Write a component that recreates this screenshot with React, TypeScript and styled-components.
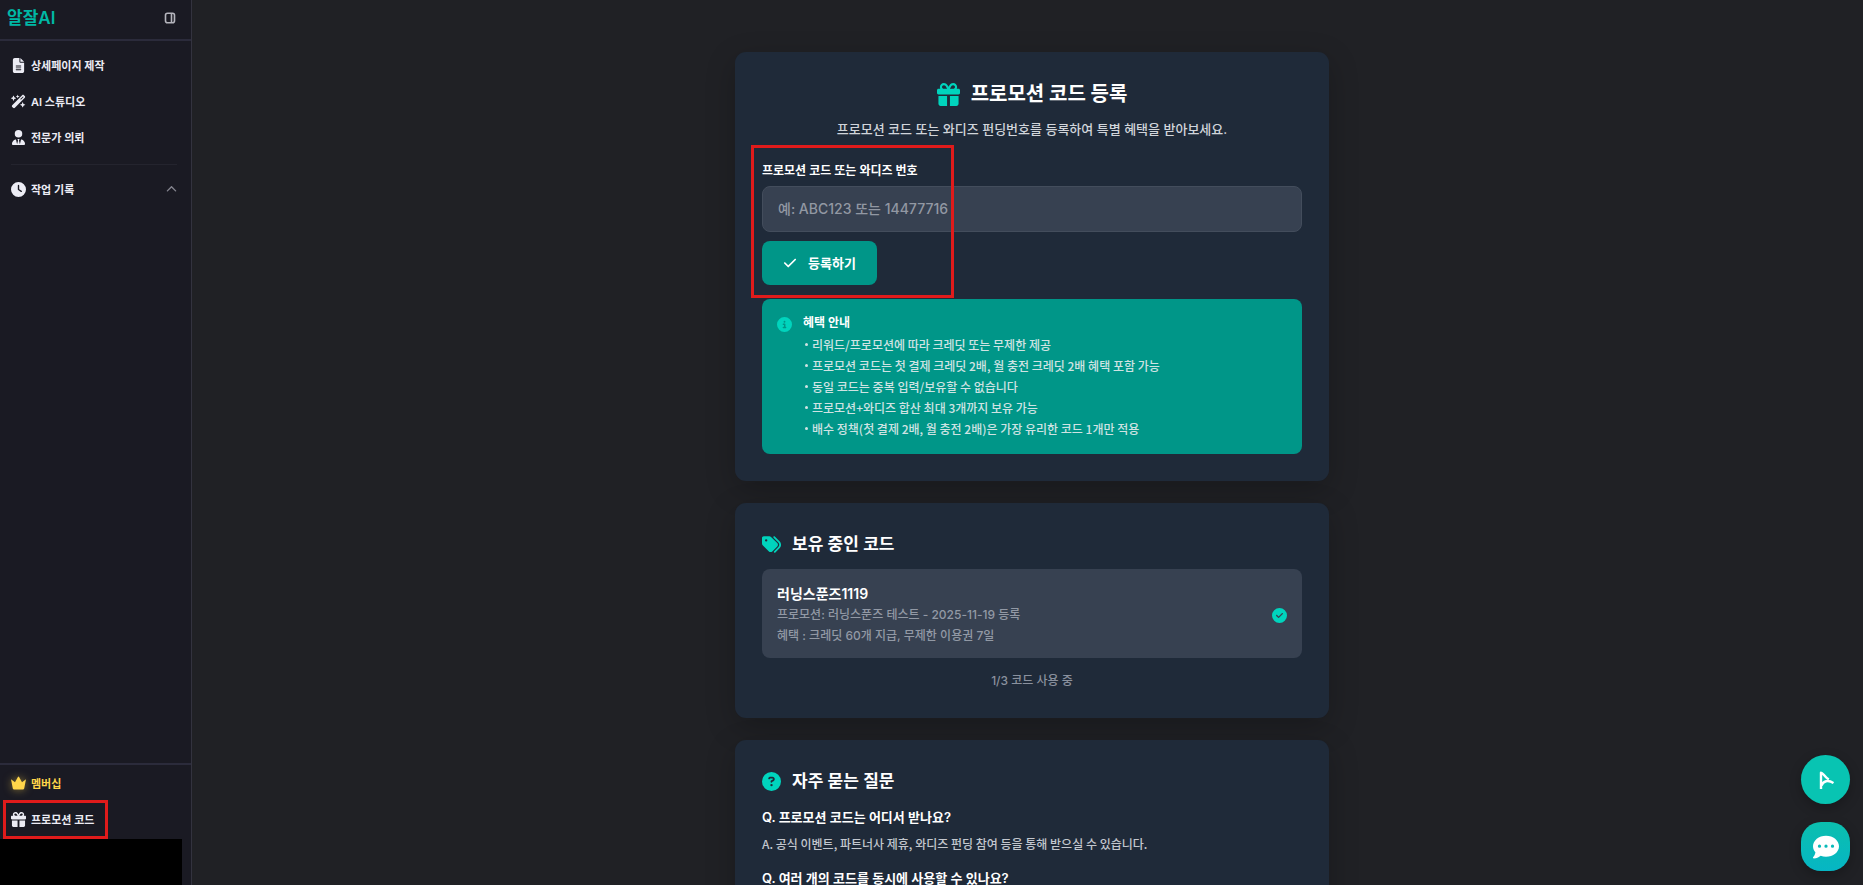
import React from 'react';
import styled, { createGlobalStyle, css } from 'styled-components';
import {
  FaCheck,
  FaChevronUp,
  FaCircleCheck,
  FaCircleInfo,
  FaCircleQuestion,
  FaClock,
  FaCommentDots,
  FaFileLines,
  FaGift,
  FaTags,
  FaUserTie,
  FaWandMagicSparkles,
} from 'react-icons/fa6';

const color = {
  page: '#202125',
  sidebar: '#1a1a23',
  line: '#2b2b3b',
  card: '#1f2a39',
  field: '#374151',
  teal: '#009688',
  accent: '#00d4bd',
  mark: '#e01b1b',
};

const GlobalStyle = createGlobalStyle`
  *, *::before, *::after { box-sizing: border-box; }
  body {
    margin: 0;
    background: ${color.page};
    color: #fff;
    font-family: Inter, 'Noto Sans CJK KR', sans-serif;
    font-size: 12px;
    font-weight: 500;
  }
  h1, h2, h3, p, ul { margin: 0; padding: 0; }
  ul { list-style: none; }
  button, input { font: inherit; }
  a { color: inherit; text-decoration: none; }
`;

const Shell = styled.div`
  display: flex;
  height: 100vh;
`;

const Sidebar = styled.aside`
  display: flex;
  flex-direction: column;
  flex: none;
  width: 192px;
  background: ${color.sidebar};
  border-right: 1px solid #33333f;
`;

const Brand = styled.header`
  display: flex;
  align-items: center;
  justify-content: space-between;
  height: 41px;
  padding: 0 15px 4px 7px;
  border-bottom: 2px solid ${color.line};
`;

const BrandName = styled.a`
  color: #00b8a5;
  font-size: 17px;
  font-weight: 600;
  line-height: 24px;
`;

const IconButton = styled.button`
  display: flex;
  padding: 0;
  border: 0;
  background: none;
  color: #b5b5bd;
  cursor: pointer;
`;

const Nav = styled.nav`
  flex: 1;
  padding: 6px 14px 0 11px;
`;

const navRow = css`
  display: flex;
  align-items: center;
  gap: 5px;
  width: 100%;
  height: 36px;
  padding: 0;
  border: 0;
  background: none;
  color: #ececf4;
  font-size: 11px;
  font-weight: 600;
  text-align: left;
  svg { flex: none; font-size: 15px; }
`;

const NavLink = styled.a<{ $gold?: boolean }>`
  ${navRow}
  ${({ $gold }) => $gold && css`
    color: #ffd54a;
    svg { filter: drop-shadow(0 0 4px rgba(255, 213, 74, 0.5)); }
  `}
`;

const HistoryToggle = styled.button`
  ${navRow}
  cursor: pointer;
  svg:last-child { margin-left: auto; font-size: 11px; color: #85858f; }
`;

const Divider = styled.hr`
  height: 1px;
  margin: 9px 0 6px;
  border: 0;
  background: #24242e;
`;

const SidebarFooter = styled.div`
  padding-left: 11px;
  border-top: 2px solid ${color.line};
`;

const Highlighted = styled.div`
  position: relative;
`;

const Mark = styled.span`
  position: absolute;
  border: 3px solid ${color.mark};
  pointer-events: none;
`;

const NavMark = styled(Mark)`
  inset: -1px 83px -2px -8px;
`;

const FormMark = styled(Mark)`
  top: -17px;
  left: -11px;
  bottom: -13px;
  width: 203px;
`;

const AccountBlock = styled.div`
  height: 46px;
  margin: 2px 9px 0 -11px;
  background: #000;
`;

const Main = styled.main`
  flex: 1;
  min-width: 0;
  padding: 52px 0 0 9px;
  overflow-y: auto;
  scrollbar-width: none;
`;

const Column = styled.div`
  display: flex;
  flex-direction: column;
  gap: 22px;
  max-width: 594px;
  margin: 0 auto;
`;

const Card = styled.section`
  padding: 27px;
  border-radius: 11px;
  background: ${color.card};
  box-shadow: 0 9px 30px rgba(0, 0, 0, 0.22);
`;

const PageTitle = styled.h1`
  display: flex;
  align-items: center;
  justify-content: center;
  gap: 11px;
  font-size: 20px;
  font-weight: 700;
  line-height: 30px;
  svg { font-size: 23px; color: ${color.accent}; }
`;

const Lead = styled.p`
  margin-top: 10px;
  color: #d1d5db;
  font-size: 13px;
  line-height: 20px;
  text-align: center;
`;

const Form = styled.form`
  position: relative;
  display: flex;
  flex-direction: column;
  align-items: flex-start;
  margin-top: 23px;
`;

const Label = styled.label`
  font-weight: 600;
  line-height: 18px;
`;

const CodeInput = styled.input`
  width: 100%;
  height: 46px;
  margin: 6px 0 9px;
  padding: 0 15px 1px;
  border: 1px solid #434d5c;
  border-radius: 8px;
  background: ${color.field};
  color: #fff;
  font-size: 14px;
  &::placeholder { color: #9298a3; opacity: 1; }
`;

const SubmitButton = styled.button`
  display: flex;
  align-items: center;
  gap: 11px;
  height: 44px;
  padding: 0 21px 1px;
  border: 0;
  border-radius: 8px;
  background: ${color.teal};
  color: #fff;
  font-size: 13px;
  font-weight: 700;
  cursor: pointer;
  svg { font-size: 14px; }
`;

const Notice = styled.div`
  display: flex;
  gap: 11px;
  margin-top: 14px;
  padding: 13px 15px 15px;
  border-radius: 8px;
  background: ${color.teal};
  > svg { flex: none; margin-top: 5px; font-size: 15px; color: ${color.accent}; }
`;

const NoticeTitle = styled.h3`
  font-size: 12px;
  font-weight: 700;
  line-height: 22px;
`;

const NoticeItem = styled.li`
  display: flex;
  align-items: center;
  gap: 4px;
  padding-left: 2px;
  color: #cfe3e3;
  font-family: 'Noto Sans CJK KR', sans-serif;
  line-height: 21px;
  &::before {
    content: '';
    width: 3px;
    height: 3px;
    border-radius: 50%;
    background: currentColor;
  }
`;

const CardTitle = styled.h2`
  display: flex;
  align-items: center;
  gap: 11px;
  margin-bottom: 11px;
  font-size: 17px;
  font-weight: 600;
  line-height: 28px;
  svg { font-size: 19px; color: ${color.accent}; }
`;

const CodeItem = styled.div`
  display: flex;
  align-items: center;
  justify-content: space-between;
  padding: 15px 15px 12px;
  border-radius: 8px;
  background: ${color.field};
  svg { font-size: 15px; color: ${color.accent}; }
`;

const CodeName = styled.h3`
  font-size: 14px;
  font-weight: 600;
  line-height: 20px;
`;

const CodeMeta = styled.p`
  color: #9299a5;
  line-height: 21px;
`;

const Usage = styled.p`
  margin-top: 13px;
  color: #8a919e;
  line-height: 20px;
  text-align: center;
`;

const Question = styled.h3`
  font-size: 13px;
  font-weight: 600;
  line-height: 22px;
`;

const Answer = styled.p`
  margin: 6px 0 13px;
  color: #c3c7ce;
  font-family: 'Noto Sans CJK KR', sans-serif;
  line-height: 20px;
`;

const FloatingStack = styled.div`
  position: fixed;
  right: 13px;
  bottom: 14px;
  display: flex;
  flex-direction: column;
  gap: 18px;
`;

const FloatingButton = styled.button<{ $chat?: boolean }>`
  display: flex;
  align-items: center;
  justify-content: center;
  width: 49px;
  height: 49px;
  padding: 0;
  border: 0;
  border-radius: ${({ $chat }) => ($chat ? '20px' : '50%')};
  background: ${({ $chat }) => ($chat ? 'linear-gradient(#0bbfae, #06b6c4)' : '#08c4b2')};
  box-shadow: 0 4px 12px rgba(0, 0, 0, 0.25);
  color: #fff;
  font-size: 26px;
  cursor: pointer;
`;

const PanelIcon = () => (
  <svg width="12" height="12" viewBox="0 0 12 12" fill="none" stroke="currentColor" strokeWidth="1.6" aria-hidden="true">
    <rect x="1.5" y="1.2" width="9" height="9.6" rx="2" />
    <path d="M7.5 1.2v9.6" />
  </svg>
);

const CrownIcon = () => (
  <svg width="1em" height="1em" viewBox="0 0 15 15" fill="currentColor" aria-hidden="true">
    <path d="M0 3.200l4 3 2.900-5.100a.7.7 0 0 1 1.200 0l2.900 5.100 4-3-1.800 9.400a1 1 0 0 1-1 .8H2.800a1 1 0 0 1-1-.8z" />
  </svg>
);

const ArrowLogo = () => (
  <svg width="16" height="20" viewBox="0 0 16 20" fill="none" stroke="currentColor" strokeWidth="2.4" aria-hidden="true">
    <path d="M3 19V2.600C5 2.600 6 6.500 10.800 9.600" strokeLinejoin="round" />
    <path d="M3.500 15.500C5 11 10 9.500 15.500 13" />
  </svg>
);

const benefits = [
  '리워드/프로모션에 따라 크레딧 또는 무제한 제공',
  '프로모션 코드는 첫 결제 크레딧 2배, 월 충전 크레딧 2배 혜택 포함 가능',
  '동일 코드는 중복 입력/보유할 수 없습니다',
  '프로모션+와디즈 합산 최대 3개까지 보유 가능',
  '배수 정책(첫 결제 2배, 월 충전 2배)은 가장 유리한 코드 1개만 적용',
];

export default function App() {
  return (
    <Shell>
      <GlobalStyle />
      <Sidebar>
        <Brand>
          <BrandName href="#">알잘AI</BrandName>
          <IconButton type="button" aria-label="사이드바 접기"><PanelIcon /></IconButton>
        </Brand>
        <Nav>
          <NavLink href="#"><FaFileLines />상세페이지 제작</NavLink>
          <NavLink href="#"><FaWandMagicSparkles />AI 스튜디오</NavLink>
          <NavLink href="#"><FaUserTie />전문가 의뢰</NavLink>
          <Divider />
          <HistoryToggle type="button"><FaClock />작업 기록<FaChevronUp /></HistoryToggle>
        </Nav>
        <SidebarFooter>
          <NavLink href="#" $gold><CrownIcon />멤버십</NavLink>
          <Highlighted>
            <NavLink href="#"><FaGift />프로모션 코드</NavLink>
            <NavMark />
          </Highlighted>
          <AccountBlock />
        </SidebarFooter>
      </Sidebar>
      <Main>
        <Column>
          <Card>
            <PageTitle><FaGift />프로모션 코드 등록</PageTitle>
            <Lead>프로모션 코드 또는 와디즈 펀딩번호를 등록하여 특별 혜택을 받아보세요.</Lead>
            <Form onSubmit={(event) => event.preventDefault()}>
              <Label htmlFor="promo-code">프로모션 코드 또는 와디즈 번호</Label>
              <CodeInput id="promo-code" type="text" placeholder="예: ABC123 또는 14477716" />
              <SubmitButton type="submit"><FaCheck />등록하기</SubmitButton>
              <FormMark />
            </Form>
            <Notice>
              <FaCircleInfo />
              <div>
                <NoticeTitle>혜택 안내</NoticeTitle>
                <ul>
                  {benefits.map((text) => <NoticeItem key={text}>{text}</NoticeItem>)}
                </ul>
              </div>
            </Notice>
          </Card>
          <Card>
            <CardTitle><FaTags />보유 중인 코드</CardTitle>
            <CodeItem>
              <div>
                <CodeName>러닝스푼즈1119</CodeName>
                <CodeMeta>프로모션: 러닝스푼즈 테스트 - 2025-11-19 등록</CodeMeta>
                <CodeMeta>혜택 : 크레딧 60개 지급, 무제한 이용권 7일</CodeMeta>
              </div>
              <FaCircleCheck />
            </CodeItem>
            <Usage>1/3 코드 사용 중</Usage>
          </Card>
          <Card>
            <CardTitle><FaCircleQuestion />자주 묻는 질문</CardTitle>
            <Question>Q. 프로모션 코드는 어디서 받나요?</Question>
            <Answer>A. 공식 이벤트, 파트너사 제휴, 와디즈 펀딩 참여 등을 통해 받으실 수 있습니다.</Answer>
            <Question>Q. 여러 개의 코드를 동시에 사용할 수 있나요?</Question>
          </Card>
        </Column>
      </Main>
      <FloatingStack>
        <FloatingButton type="button" aria-label="AI 도우미"><ArrowLogo /></FloatingButton>
        <FloatingButton type="button" aria-label="채팅 상담" $chat><FaCommentDots /></FloatingButton>
      </FloatingStack>
    </Shell>
  );
}
